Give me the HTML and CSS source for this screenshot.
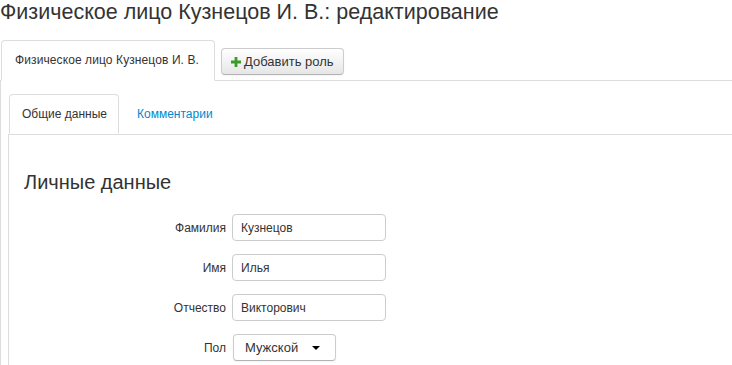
FILE: index.html
```html
<!DOCTYPE html>
<html lang="ru">
<head>
    <meta charset="UTF-8">
    <meta name="viewport" content="width=device-width, initial-scale=1.0">
    <title>Физическое лицо Кузнецов И. В.: редактирование</title>
    <link rel="stylesheet" href="styles.css">
</head>
<body>
    <h1 class="page-title">Физическое лицо Кузнецов И. В.: редактирование</h1>

    <div class="tabs-nav outer-nav">
        <div class="tab active">Физическое лицо Кузнецов И. В.</div>
        <button class="btn add-role">
            <svg width="10" height="10" viewBox="0 0 10 10"><path d="M3.6 0h2.8v3.6H10v2.8H6.4V10H3.6V6.4H0V3.6h3.6z" fill="#3b9c2a"/></svg>
            Добавить роль
        </button>
    </div>

    <div class="outer-panel">
        <div class="tabs-nav inner-nav">
            <div class="tab active">Общие данные</div>
            <a class="tab link" href="#">Комментарии</a>
        </div>

        <div class="inner-panel">
            <h2 class="section-title">Личные данные</h2>

            <div class="form-row">
                <label>Фамилия</label>
                <input type="text" value="Кузнецов">
            </div>
            <div class="form-row">
                <label>Имя</label>
                <input type="text" value="Илья">
            </div>
            <div class="form-row">
                <label>Отчество</label>
                <input type="text" value="Викторович">
            </div>
            <div class="form-row">
                <label>Пол</label>
                <button class="btn select">Мужской <span class="caret"></span></button>
            </div>
        </div>
    </div>
</body>
</html>
```

FILE: styles.css
```css
body{
    margin: 0;
    font-family: "Liberation Sans", Arial, sans-serif;
    color: #333;
    background: white;
}
.page-title{
    margin: 0 0 16px 0;
    font-size: 21.5px;
    font-weight: normal;
    line-height: 24px;
}

/* TABS */
.tabs-nav{
    display: flex;
    align-items: flex-start;
    border-bottom: 1px solid #ddd;
}
.outer-nav{
    padding-left: 1px;
}
.outer-nav .tab{
    padding: 0 15px 0 13px;
    letter-spacing: 0.1px;
}
.tab{
    height: 39px;
    line-height: 39px;
    padding: 0 12px;
    font-size: 12px;
    border: 1px solid transparent;
    border-radius: 4px 4px 0 0;
    margin-bottom: -1px;
    text-decoration: none;
}
.tab.active{
    border-color: #ddd;
    border-bottom-color: white;
    background: white;
    color: #333;
}
.tab.link{
    color: #0088cc;
    padding: 0 17px;
}
.inner-nav .tab.active{
    height: 38px;
    line-height: 38px;
    padding: 0 11px 0 12px;
}

/* BUTTONS */
.btn{
    font-family: inherit;
    color: #333;
    background: linear-gradient(#ffffff, #e6e6e6);
    border: 1px solid #ccc;
    border-bottom-color: #b3b3b3;
    border-radius: 4px;
    box-shadow: inset 0 1px 0 rgba(255,255,255,0.2), 0 1px 2px rgba(0,0,0,0.05);
    cursor: pointer;
}
.add-role{
    margin: 8px 0 0 6px;
    height: 27px;
    padding: 0 9px;
    font-size: 13px;
    display: flex;
    align-items: center;
    gap: 3px;
}

/* PANELS */
.outer-panel{
    border-left: 1px solid #ddd;
    padding: 13px 0 0 7px;
}
.inner-nav{
    padding-left: 1px;
}
.inner-panel{
    border-left: 1px solid #ddd;
    padding: 35px 0 0 15px;
    min-height: 240px;
}
.section-title{
    margin: 0 0 20px 0;
    font-size: 20px;
    font-weight: normal;
    line-height: 24px;
}

/* FORM */
.form-row{
    display: flex;
    align-items: center;
    gap: 6px;
    margin-bottom: 13px;
}
.form-row label{
    width: 202px;
    text-align: right;
    font-size: 12px;
}
.form-row input{
    width: 154px;
    height: 27px;
    box-sizing: border-box;
    border: 1px solid #ccc;
    border-radius: 4px;
    padding: 0 8px;
    font-family: inherit;
    font-size: 12px;
    color: #333;
}
.select{
    width: 103px;
    height: 27px;
    margin-left: 1px;
    font-size: 13px;
    background: white;
    display: flex;
    align-items: center;
    padding: 0 11px;
    gap: 14px;
}
.caret{
    width: 0;
    height: 0;
    border-left: 4px solid transparent;
    border-right: 4px solid transparent;
    border-top: 4px solid #000;
}
```
